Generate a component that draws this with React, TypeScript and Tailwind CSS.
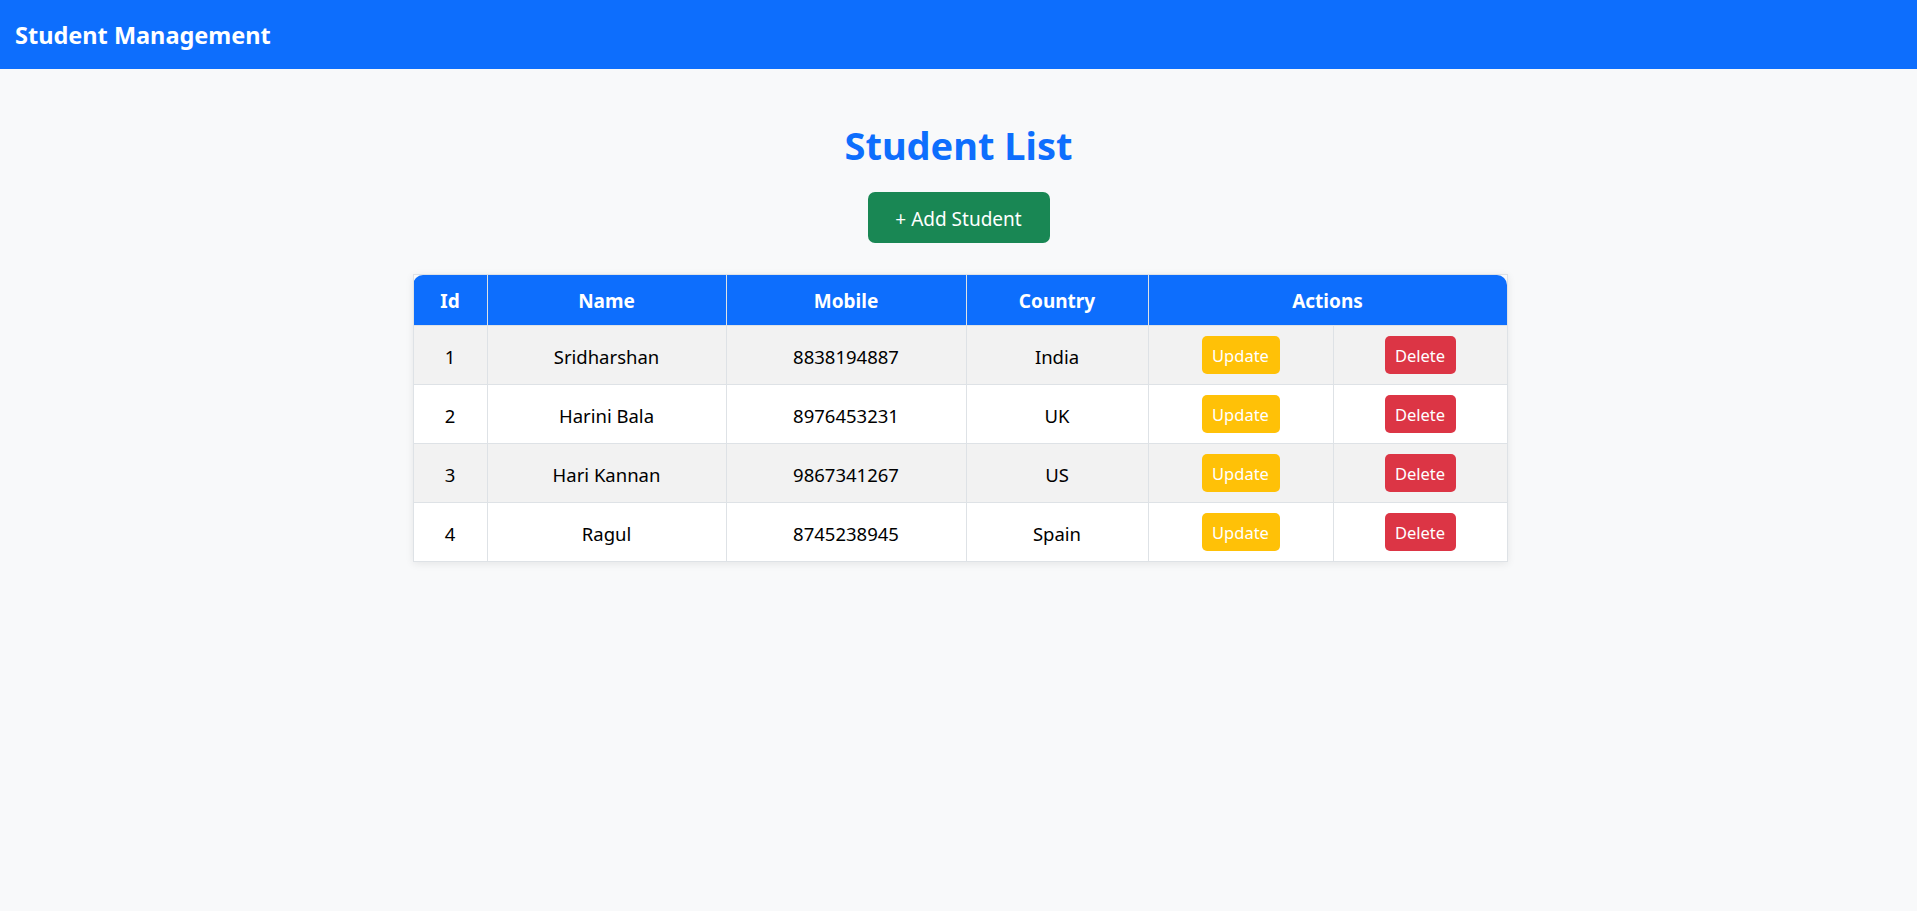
const students = [
  { id: 1, name: "Sridharshan", mobile: "8838194887", country: "India" },
  { id: 2, name: "Harini Bala", mobile: "8976453231", country: "UK" },
  { id: 3, name: "Hari Kannan", mobile: "9867341267", country: "US" },
  { id: 4, name: "Ragul", mobile: "8745238945", country: "Spain" },
];

const App = () => {
  return (
    <div className="min-h-screen bg-[#f8f9fa] font-['Noto_Sans',sans-serif] text-black">
      <nav className="h-[69px] bg-[#0d6efd] flex items-center px-[15px] pt-[2px]">
        <span className="text-white font-bold text-[23.5px]">Student Management</span>
      </nav>

      <div className="flex flex-col items-center pt-[52px]">
        <h1 className="text-[#0d6efd] font-bold text-[38px] leading-[48px]">Student List</h1>
        <button className="mt-[23px] h-[51px] w-[182px] pt-[3px] rounded-[7px] bg-[#198754] text-white text-[19px]">
          + Add Student
        </button>

        <div className="mt-[31px] ml-[3px] shadow-[0_2px_8px_rgba(0,0,0,0.08)]">
          <table className="table-fixed border-collapse w-[1094px] text-center text-[18.5px]">
            <colgroup>
              <col className="w-[74px]" />
              <col className="w-[239px]" />
              <col className="w-[240px]" />
              <col className="w-[182px]" />
              <col className="w-[185px]" />
              <col className="w-[174px]" />
            </colgroup>
            <thead>
              <tr className="h-[51px] bg-[#0d6efd] text-white font-bold text-[19px]">
                <th className="border border-[#dee2e6] pt-[3px] rounded-tl-[10px]">Id</th>
                <th className="border border-[#dee2e6] pt-[3px]">Name</th>
                <th className="border border-[#dee2e6] pt-[3px]">Mobile</th>
                <th className="border border-[#dee2e6] pt-[3px]">Country</th>
                <th colSpan={2} className="border border-[#dee2e6] pt-[3px] rounded-tr-[10px]">
                  Actions
                </th>
              </tr>
            </thead>
            <tbody>
              {students.map((s, i) => (
                <tr key={s.id} className={i % 2 === 0 ? "h-[59px] bg-[#f2f2f2]" : "h-[59px] bg-white"}>
                  <td className="border border-[#dee2e6] pt-[4px]">{s.id}</td>
                  <td className="border border-[#dee2e6] pt-[4px]">{s.name}</td>
                  <td className="border border-[#dee2e6] pt-[4px]">{s.mobile}</td>
                  <td className="border border-[#dee2e6] pt-[4px]">{s.country}</td>
                  <td className="border border-[#dee2e6]">
                    <button className="h-[38px] w-[78px] pt-[2px] rounded-[5px] bg-[#ffc107] text-white text-[16.5px]">
                      Update
                    </button>
                  </td>
                  <td className="border border-[#dee2e6]">
                    <button className="h-[38px] w-[71px] pt-[2px] rounded-[5px] bg-[#dc3545] text-white text-[16.5px]">
                      Delete
                    </button>
                  </td>
                </tr>
              ))}
            </tbody>
          </table>
        </div>
      </div>
    </div>
  );
};

export default App;
